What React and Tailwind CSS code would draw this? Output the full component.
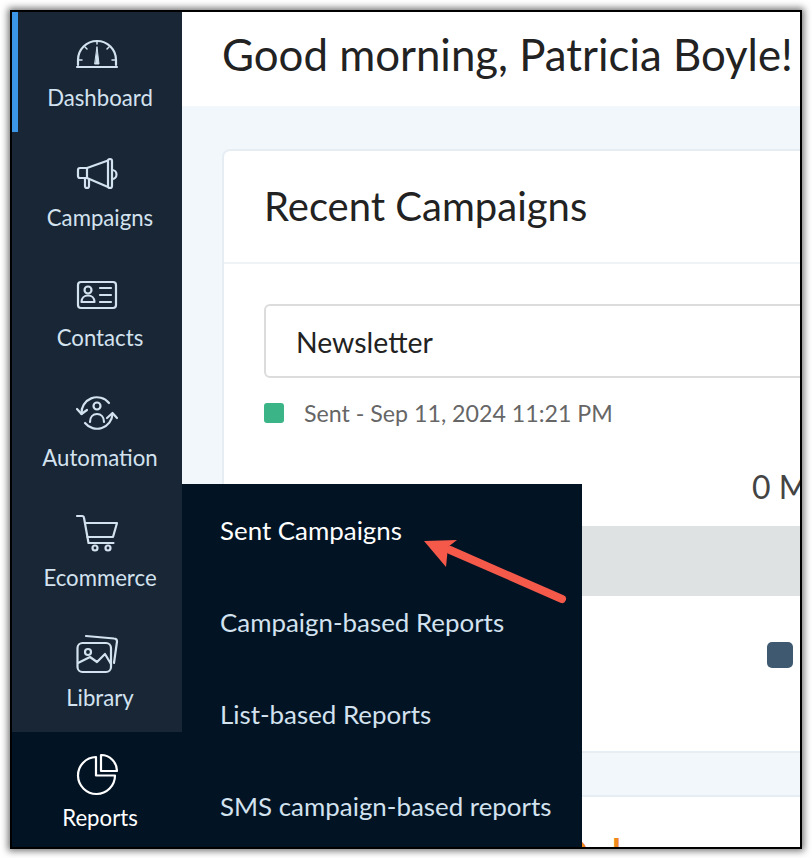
const stroke = {
  fill: "none",
  stroke: "currentColor",
  strokeWidth: 2.2,
  strokeLinecap: "round",
  strokeLinejoin: "round",
};

const Icon = ({ children }) => (
  <svg viewBox="0 0 48 48" className="w-12 h-12 shrink-0" {...stroke}>
    {children}
  </svg>
);

const icons = {
  dashboard: (
    <Icon>
      <path d="M5 35v-5a19 19 0 0 1 38 0v5" />
      <path d="M4 37h40" />
      <path d="M24 11v3M12 17l2 2M36 17l-2 2M6 30h3M42 30h-3" strokeWidth="1.5" />
      <path d="M24 17l2 17h-4z" fill="currentColor" strokeWidth="1" />
    </Icon>
  ),
  campaigns: (
    <Icon>
      <path d="M14 18H7a2 2 0 0 0-2 2v6a2 2 0 0 0 2 2h7z" />
      <path d="M14 18l21-7.5M14 28l21 9" />
      <rect x="35" y="9" width="4" height="29" rx="2" />
      <path d="M39 20a4.5 4.5 0 0 1 0 9" />
      <path d="M12 28v8a2 2 0 0 0 4 0v-7" />
    </Icon>
  ),
  contacts: (
    <Icon>
      <rect x="5" y="12" width="38" height="26" rx="3" />
      <circle cx="15" cy="20" r="3.5" />
      <path d="M8.5 32c0-4 3-6.5 6.5-6.5s6.5 2.500 6.500 6.500h-13" />
      <path d="M27 18h11M27 25h11M27 32h11" />
    </Icon>
  ),
  automation: (
    <Icon>
      <path d="M8.500 24A15.500 15.500 0 0 1 36 13" />
      <path d="M39.500 24A15.500 15.500 0 0 1 12 33" />
      <path d="M4 19l4.500 5 5.500-4M34 28l5.500-5 4.500 5" />
      <circle cx="24" cy="16" r="3.500" />
      <path d="M17 32c0-5 3-8 7-8s7 3 7 8" />
    </Icon>
  ),
  ecommerce: (
    <Icon>
      <path d="M4 6h5a2 2 0 0 1 2 1.700L15.500 33h25" />
      <path d="M12 13h32l-4 14H14.500" />
      <circle cx="22" cy="38" r="2.500" />
      <circle cx="35" cy="38" r="2.500" />
    </Icon>
  ),
  library: (
    <Icon>
      <rect x="4.500" y="13" width="33.500" height="29" rx="5" />
      <path d="M13 6l28 2.500a3 3 0 0 1 3 3L41 33" />
      <circle cx="15" cy="22" r="3" />
      <path d="M5 33l12-6 7 5 8-8 6 10" />
    </Icon>
  ),
  reports: (
    <Icon>
      <path d="M23 7a18.500 18.500 0 1 0 19 18.500H23z" />
      <path d="M28 5a16 16 0 0 1 16 16H28z" />
    </Icon>
  ),
};

const navItems = [
  { key: "dashboard", label: "Dashboard", active: true },
  { key: "campaigns", label: "Campaigns" },
  { key: "contacts", label: "Contacts" },
  { key: "automation", label: "Automation" },
  { key: "ecommerce", label: "Ecommerce" },
  { key: "library", label: "Library" },
  { key: "reports", label: "Reports", open: true },
];

const subItems = ["Sent Campaigns", "Campaign-based Reports", "List-based Reports", "SMS campaign-based reports"];

function NavItem({ item }) {
  return (
    <div
      className={`relative h-[120px] shrink-0 flex flex-col items-center pt-[18px] ${
        item.open ? "bg-[#021324] text-white" : "text-[#d3e2ef]"
      }`}
    >
      {item.active && <div className="absolute left-0 top-0 bottom-0 w-1.5 bg-[#3b96e8]" />}
      {icons[item.key]}
      <span className="mt-[7px] pl-1.5 text-[22.2px] leading-[26px]">{item.label}</span>
    </div>
  );
}

export default function App() {
  return (
    <div className="w-[812px] h-[858px] bg-white p-2.5 overflow-hidden font-['Lato','Noto_Sans',sans-serif]">
      <div className="relative w-[792px] h-[839px] border-2 border-black shadow-[0_0_7px_2px_rgba(0,0,0,0.55)] overflow-hidden flex">
        {/* sidebar */}
        <nav className="w-[170px] shrink-0 bg-[#192635] flex flex-col">
          {navItems.map((item) => (
            <NavItem key={item.key} item={item} />
          ))}
        </nav>

        {/* main */}
        <main className="flex-1 min-w-0 bg-[#f2f7fb] flex flex-col">
          <header className="h-[94px] shrink-0 bg-white pl-10 pt-[15px] text-[#222222] text-[43.8px] leading-[54px] whitespace-nowrap">
            Good morning, Patricia Boyle!
          </header>

          <section className="mt-[43px] ml-10 w-[700px] h-[604px] shrink-0 bg-white border-2 border-[#e7eef3] rounded-lg">
            <div className="h-[113px] border-b-2 border-[#eff3f6] pl-10 pt-[28px] text-[#222222] text-[40px] leading-[54px]">
              Recent Campaigns
            </div>
            <div className="pl-10 pt-10">
              <div className="h-[74px] border-2 border-[#dcdcdc] rounded-md pl-[30px] pt-[3px] flex items-center text-[#222222] text-[28.4px]">
                Newsletter
              </div>
              <div className="mt-[25px] flex items-center gap-5 text-[#666666] text-[23.2px] leading-5">
                <span className="w-5 h-5 rounded-[3px] bg-[#3bb587]" />
                Sent - Sep 11, 2024 11:21 PM
              </div>
              <div className="mt-[41px] pl-[488px] text-[#444444] text-[32px] leading-[46px] whitespace-nowrap">0 Messages</div>
            </div>
            <div className="mt-[16px] h-[70px] bg-[#dfe2e3]" />
            <div className="pl-[543px] pt-[46px]">
              <span className="block w-[26px] h-[26px] rounded-[5px] bg-[#3f5a70]" />
            </div>
          </section>

          <section className="mt-[42px] ml-10 w-[700px] h-[100px] shrink-0 bg-white border-t-2 border-[#e7eef3] pl-[337px] pt-[32px] flex gap-[24px] font-bold text-[#f08a1d] text-[36px] leading-[44px]">
            <span>O</span>
            <span>l</span>
          </section>
        </main>

        {/* reports flyout */}
        <div className="absolute left-[170px] top-[472px] bottom-0 w-[400px] bg-[#021324] flex flex-col">
          {subItems.map((label, i) => (
            <div
              key={label}
              className={`h-[92px] shrink-0 flex items-center pl-[38px] text-[25.9px] whitespace-nowrap ${
                i === 0 ? "text-white" : "text-[#d3e2ef]"
              }`}
            >
              {label}
            </div>
          ))}
        </div>

        {/* annotation arrow */}
        <svg className="absolute left-[400px] top-[515px] w-[160px] h-[80px]" viewBox="0 0 160 80">
          <path d="M150 72L38 23" stroke="#f5594a" strokeWidth="8" strokeLinecap="round" fill="none" />
          <path d="M12 14L45 13 36 20 34 40z" fill="#f5594a" />
        </svg>
      </div>
    </div>
  );
}
